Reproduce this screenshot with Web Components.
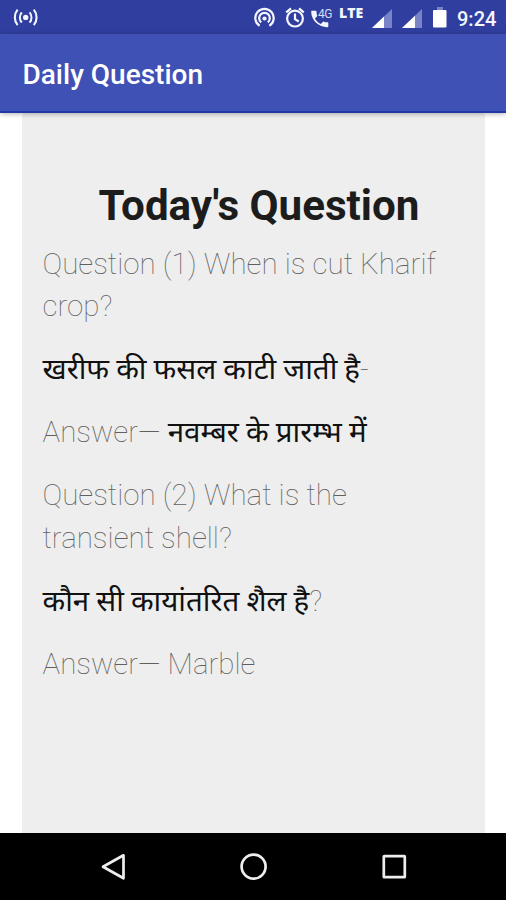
<!DOCTYPE html>
<html lang="en">
<head>
<meta charset="utf-8">
<title>Daily Question</title>
<style>
html, body { margin: 0; height: 100%; overflow: hidden; background: #fff; font-family: Roboto, "Noto Sans", sans-serif; }
</style>
</head>
<body>
<daily-app></daily-app>
<script>
const define = (name, html) => customElements.define(name, class extends HTMLElement {
  constructor() {
    super();
    this.attachShadow({ mode: 'open' }).innerHTML = html;
  }
});

define('status-bar', `
<style>
:host { display: flex; align-items: center; height: 34px; flex: none; background: #303f9f; color: #f4f6ff; box-sizing: border-box; }
svg { display: block; flex: none; }
.lte { font: 800 14px/14px "Open Sans", sans-serif; margin: 0 0 8px 8px; width: 27px; flex: none; }
.time { font: 500 20px/24px Roboto, sans-serif; margin: 3px 0 0 7px; width: 39px; flex: none; }
.sp { flex: 1; }
.end { width: 10px; flex: none; }
.g { position: relative; width: 22px; height: 34px; margin-left: 4px; flex: none; }
.g span { position: absolute; left: 9px; top: 8px; font: 400 12px/12px Roboto, sans-serif; letter-spacing: -.5px; color: #d5daf5; }
</style>
<svg width="40" height="34" viewBox="0 0 40 34" fill="none" stroke="#f4f6ff" stroke-width="2.1">
  <circle cx="25.7" cy="17.4" r="2.7" fill="#f4f6ff" stroke="none"/>
  <path d="M21.8 12.3a8 8 0 0 0 0 10.2M29.6 12.3a8 8 0 0 1 0 10.2M17.6 9.6a12.4 12.4 0 0 0 0 15.6M33.8 9.6a12.4 12.4 0 0 1 0 15.6"/>
</svg>
<div class="sp"></div>
<svg width="54" height="34" viewBox="252 0 54 34" fill="none" stroke="#f4f6ff" stroke-width="2.2">
  <path d="M260.6 25.8a9.2 9.2 0 1 1 9.8 0M262.2 22.3a5.3 5.3 0 1 1 6.600 0"/>
  <circle cx="265.5" cy="18.500" r="2.1" fill="#f4f6ff" stroke="none"/>
  <circle cx="296" cy="18.600" r="7.9"/>
  <path d="M296 13.500v5.600l3.8 2.4M287.2 12.300l4.8-3.9M304.8 12.300l-4.8-3.9"/>
</svg>
<div class="g">
  <svg width="22" height="34" viewBox="310 0 22 34"><path fill="#f4f6ff" d="M313.200 10.800h3.300c.6 0 1 .4 1 1 0 1.300.2 2.500.6 3.600.1.400 0 .7-.2 1l-2 2.100c1.500 2.800 3.100 4.200 5.900 5.500l2-2.100c.3-.3.700-.4 1-.2 1.100.4 2.300.5 3.500.5.600 0 1 .4 1 1v3c0 .6-.4 1-1 1C319.900 27.200 312.200 20.500 312.200 11.800c0-.6.400-1 1-1z"/></svg>
  <span>4G</span>
</div>
<div class="lte">LTE</div>
<svg width="84" height="34" viewBox="366 0 84 34">
  <path d="M372 28L392 9V28z" fill="#7983c7"/><path d="M372 28L384 16.6V28z" fill="#fff"/>
  <path d="M402 28L422 9V28z" fill="#7983c7"/><path d="M402 28L415 15.7V28z" fill="#fff"/>
  <path d="M437 7h6v3h-6z" fill="#7983c7"/><rect x="433" y="10" width="13.5" height="17.6" rx="1" fill="#fff"/>
</svg>
<div class="time"><slot></slot></div>
<div class="end"></div>`);

define('app-toolbar', `
<style>
:host { display: flex; align-items: center; flex: none; height: 79px; box-sizing: border-box; padding: 4px 23px 0 22.500px; background: #3f51b5; color: #fff; border-bottom: 2px solid #2038a4; box-shadow: 0 1px 5px rgba(0,0,0,.3); z-index: 1; font: 500 28px/32px Roboto, sans-serif; }
span { display: block; transform: scaleY(.97); }
</style><span><slot></slot></span>`);

define('question-card', `
<style>
:host { display: block; flex: 1; min-height: 0; box-sizing: border-box; margin: 0 21px 0 22px; padding: 68px 20.5px 0 20.5px; background: #eee; border-radius: 3px 3px 0 0; }
h1 { margin: 0 0 11.500px; padding-left: 11px; text-align: center; color: #1c1c1c; font: 700 42.17px/50px Roboto, sans-serif; }
</style>
<h1><slot name="title"></slot></h1><slot></slot>`);

define('text-line', `
<style>
:host { display: block; margin: 0 0 21.08px; color: #606060; font: 100 29.52px/42.17px Roboto, "Noto Sans", "Noto Sans Devanagari", sans-serif; }
</style><slot></slot>`);

define('hindi-text', `
<style>
:host { font: 400 29.52px/1px "Noto Sans", "Noto Sans Devanagari", sans-serif; color: #111; word-spacing: -.6px; }
</style><slot></slot>`);

define('nav-bar', `
<style>
:host { display: block; flex: none; height: 67px; background: #000; }
svg { display: block; }
</style>
<svg width="506" height="67" viewBox="0 833 506 67" fill="none" stroke="#eee" stroke-width="2.7">
  <path d="M123.5 855.3V878.3L103 866.8z" stroke-linejoin="round"/>
  <circle cx="253.6" cy="866.6" r="12"/>
  <rect x="383.8" y="856.2" width="21" height="21" rx=".5"/>
</svg>`);

define('daily-app', `
<style>:host { display: flex; flex-direction: column; height: 900px; width: 506px; }</style>
<status-bar>9:24</status-bar>
<app-toolbar>Daily Question</app-toolbar>
<question-card>
  <span slot="title">Today's Question</span>
  <text-line>Question (1) When is cut Kharif crop?</text-line>
  <text-line><hindi-text>खरीफ की फसल काटी जाती है</hindi-text>-</text-line>
  <text-line>Answer— <hindi-text>नवम्बर के प्रारम्भ में</hindi-text></text-line>
  <text-line>Question (2) What is the transient shell?</text-line>
  <text-line><hindi-text>कौन सी कायांतरित शैल है</hindi-text>?</text-line>
  <text-line>Answer— Marble</text-line>
</question-card>
<nav-bar></nav-bar>`);
</script>
</body>
</html>
